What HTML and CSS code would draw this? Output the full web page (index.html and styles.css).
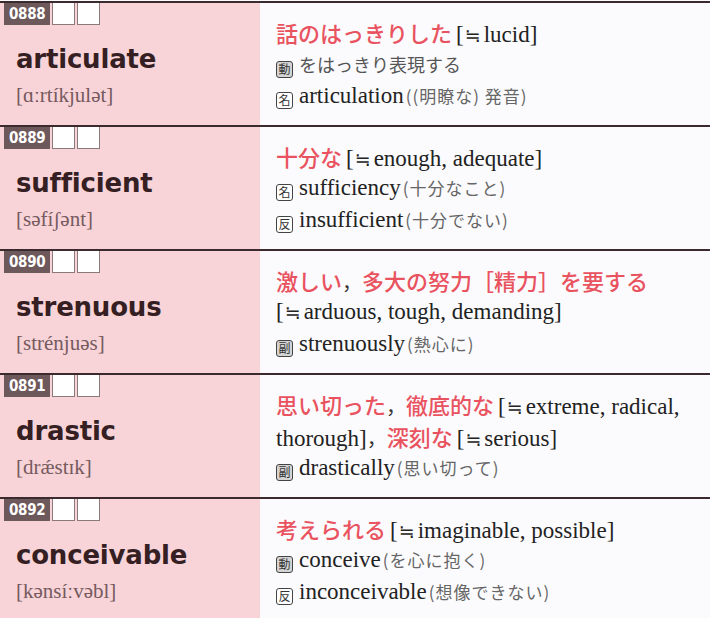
FILE: index.html
```html
<!DOCTYPE html>
<html lang="ja">
<head>
<meta charset="utf-8">
<title>単語リスト</title>
<link rel="stylesheet" href="styles.css">
</head>
<body>
<div class="page">
  <div class="entry">
    <div class="head">
      <div class="tags"><span class="num">0888</span><span class="chk"></span><span class="chk"></span></div>
      <div class="word">articulate</div>
      <div class="pron">[ɑːrtíkjulət]</div>
    </div>
    <div class="body">
      <p class="line"><span class="red">話のはっきりした</span> <span class="en">[<span class="ap">≒</span>lucid]</span></p>
      <p class="line"><span class="pos fill">動</span><span class="jp">をはっきり表現する</span></p>
      <p class="line"><span class="pos">名</span><span class="en">articulation</span><span class="sm">((明瞭な) 発音)</span></p>
    </div>
  </div>

  <div class="entry">
    <div class="head">
      <div class="tags"><span class="num">0889</span><span class="chk"></span><span class="chk"></span></div>
      <div class="word">sufficient</div>
      <div class="pron">[səfíʃənt]</div>
    </div>
    <div class="body">
      <p class="line"><span class="red">十分な</span> <span class="en">[<span class="ap">≒</span>enough, adequate]</span></p>
      <p class="line"><span class="pos">名</span><span class="en">sufficiency</span><span class="sm">(十分なこと)</span></p>
      <p class="line"><span class="pos">反</span><span class="en">insufficient</span><span class="sm">(十分でない)</span></p>
    </div>
  </div>

  <div class="entry">
    <div class="head">
      <div class="tags"><span class="num">0890</span><span class="chk"></span><span class="chk"></span></div>
      <div class="word">strenuous</div>
      <div class="pron">[strénjuəs]</div>
    </div>
    <div class="body">
      <p class="line"><span class="red">激しい</span><span class="cm">，</span><span class="red">多大の努力［精力］を要する</span></p>
      <p class="line"><span class="en">[<span class="ap">≒</span>arduous, tough, demanding]</span></p>
      <p class="line"><span class="pos fill">副</span><span class="en">strenuously</span><span class="sm">(熱心に)</span></p>
    </div>
  </div>

  <div class="entry">
    <div class="head">
      <div class="tags"><span class="num">0891</span><span class="chk"></span><span class="chk"></span></div>
      <div class="word">drastic</div>
      <div class="pron">[drǽstɪk]</div>
    </div>
    <div class="body">
      <p class="line"><span class="red">思い切った</span><span class="cm">，</span><span class="red">徹底的な</span> <span class="en">[<span class="ap">≒</span>extreme, radical,</span></p>
      <p class="line"><span class="en">thorough]</span><span class="cm">，</span><span class="red">深刻な</span> <span class="en">[<span class="ap">≒</span>serious]</span></p>
      <p class="line"><span class="pos fill">副</span><span class="en">drastically</span><span class="sm">(思い切って)</span></p>
    </div>
  </div>

  <div class="entry">
    <div class="head">
      <div class="tags"><span class="num">0892</span><span class="chk"></span><span class="chk"></span></div>
      <div class="word">conceivable</div>
      <div class="pron">[kənsíːvəbl]</div>
    </div>
    <div class="body">
      <p class="line"><span class="red">考えられる</span> <span class="en">[<span class="ap">≒</span>imaginable, possible]</span></p>
      <p class="line"><span class="pos fill">動</span><span class="en">conceive</span><span class="sm">(を心に抱く)</span></p>
      <p class="line"><span class="pos">反</span><span class="en">inconceivable</span><span class="sm">(想像できない)</span></p>
    </div>
  </div>
</div>
</body>
</html>
```

FILE: styles.css
```css
* { box-sizing: border-box; }
html, body { margin: 0; padding: 0; background: #fbfbfd; }
body { width: 710px; height: 618px; overflow: hidden; }

.page { padding-top: 1px; }

.entry {
  display: grid;
  grid-template-columns: 260px 1fr;
  height: 124px;
  border-top: 2px solid #3b2b2e;
}

.head {
  background: #f8d4d9;
  padding-left: 4px;
}

.tags { display: flex; height: 22px; gap: 2px; }
.num {
  width: 46px;
  background: #6d585b;
  color: #fff;
  font-family: "DejaVu Sans", sans-serif;
  font-stretch: condensed;
  font-weight: bold;
  font-size: 15px;
  line-height: 22px;
  padding-left: 5px;
  letter-spacing: -0.3px;
}
.chk {
  width: 23px;
  background: #fff;
  border: 1px solid #8a7a7c;
  border-top: 0;
}

.word {
  margin-top: 19px;
  padding-left: 12px;
  font-family: "DejaVu Sans", sans-serif;
  font-weight: bold;
  font-size: 26px;
  line-height: 30px;
  color: #351f23;
  letter-spacing: -0.2px;
}
.pron {
  margin-top: 8px;
  padding-left: 12px;
  font-family: "Liberation Serif", serif;
  font-size: 21px;
  line-height: 26px;
  color: #765a5e;
}

.body {
  padding: 13px 0 0 16px;
  font-family: "Liberation Serif", "Noto Sans CJK JP", serif;
  color: #262626;
}
.line {
  margin: 0;
  height: 32px;
  line-height: 32px;
  white-space: nowrap;
}
.red {
  font-family: "Noto Sans CJK JP", sans-serif;
  font-weight: 500;
  font-size: 22px;
  color: #e9535f;
}
.cm {
  font-family: "Noto Sans CJK JP", sans-serif;
  font-size: 20px;
  color: #333;
}
.en { font-size: 23px; color: #222; }
.ap {
  font-family: "DejaVu Sans", sans-serif;
  font-size: 19px;
  margin: 0 3px 0 1px;
}
.jp {
  font-family: "Noto Sans CJK JP", sans-serif;
  font-size: 18px;
  color: #555;
}
.sm {
  font-family: "Noto Sans CJK JP", sans-serif;
  font-size: 17px;
  letter-spacing: 1px;
  color: #666;
  margin-left: 2px;
}
.pos {
  display: inline-block;
  width: 17px;
  height: 17px;
  border: 1.5px solid #444;
  border-radius: 3px;
  font-family: "Noto Sans CJK JP", sans-serif;
  font-size: 12px;
  line-height: 14px;
  text-align: center;
  color: #333;
  background: #fff;
  margin-right: 6px;
  vertical-align: -2px;
}
.pos.fill { background: #d4d4d4; }
```
